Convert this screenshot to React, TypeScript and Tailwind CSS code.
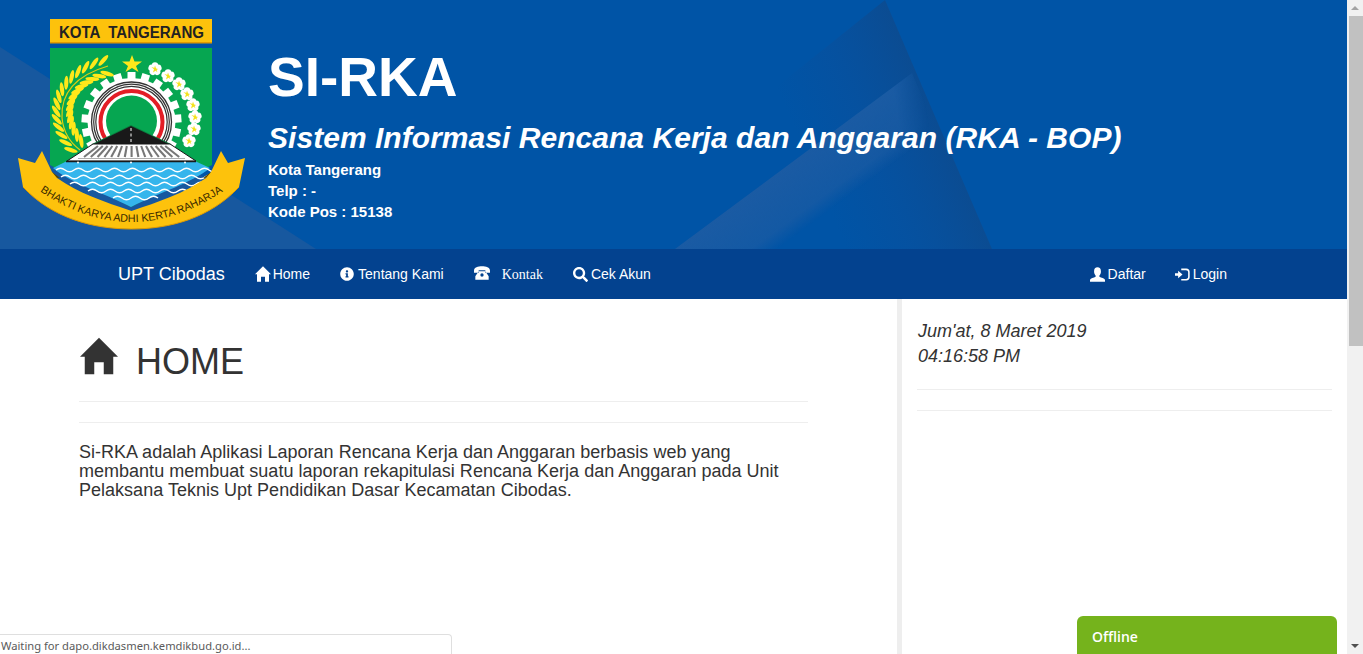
import React from "react";
import { FaInfoCircle, FaSearch } from "react-icons/fa";

const Glyph = ({ d, className = "" }: { d: string; className?: string }) => (
  <svg viewBox="0 0 24 24" className={className} fill="currentColor"><path d={d} fillRule="evenodd" /></svg>
);

const HOUSE = "M12 .5 24 12.5H21V23.5H15V16H9V23.5H3V12.5H0Z";
const PHONE = "M0 8.5C0 3.5 6 2 12 2S24 3.5 24 8.5V11.5H17V8H7V11.5H0ZM7 9.5H17L22 17V22H2V17ZM12 12.5A2.5 2.5 0 1 0 12 17.5 2.5 2.5 0 0 0 12 12.5Z";
const LOGIN = "M0 10H5V6L12 12 5 18V14H0ZM10 2.5H18C21.5 2.5 23.5 4.5 23.5 8V16C23.5 19.5 21.5 21.5 18 21.5H10V19H17.5C19.7 19 21 17.7 21 15.5V8.5C21 6.3 19.7 5 17.5 5H10Z";
const USER = "M12 .5C15.5.5 17.5 3 17.5 7 17.5 10.5 16 12.5 15 13.5V15.5C18 17 23 18 24 20.5V23.5H0V20.5C1 18 6 17 9 15.5V13.5C8 12.5 6.5 10.5 6.5 7 6.5 3 8.5.5 12 .5Z";

function HeaderBackdrop() {
  return (
    <svg className="absolute inset-0 h-full w-full" viewBox="0 0 1347 249" preserveAspectRatio="none" aria-hidden="true">
      <defs>
        <linearGradient id="wedge" gradientUnits="userSpaceOnUse" x1="938" y1="124" x2="815" y2="177">
          <stop offset="0" stopColor="#0b4c92" />
          <stop offset="0.55" stopColor="#0a4f9b" stopOpacity="0.5" />
          <stop offset="1" stopColor="#0a4f9b" stopOpacity="0" />
        </linearGradient>
        <linearGradient id="strip" gradientUnits="userSpaceOnUse" x1="794" y1="161" x2="830" y2="210">
          <stop offset="0" stopColor="#1a5ba3" />
          <stop offset="0.75" stopColor="#1a5ba3" stopOpacity="0.75" />
          <stop offset="1" stopColor="#1a5ba3" stopOpacity="0" />
        </linearGradient>
        <linearGradient id="stripEnd" gradientUnits="userSpaceOnUse" x1="860" y1="110" x2="925" y2="100">
          <stop offset="0" stopColor="#fff" />
          <stop offset="0.55" stopColor="#fff" />
          <stop offset="1" stopColor="#000" />
        </linearGradient>
        <mask id="stripMask" maskUnits="userSpaceOnUse" x="660" y="60" width="300" height="190">
          <rect x="660" y="60" width="300" height="190" fill="url(#stripEnd)" />
        </mask>
      </defs>
      <polygon points="0,47 316,249 0,249" fill="#17589f" />
      <polygon points="885,0 992,249 672,249 760,100" fill="url(#wedge)" />
      <polygon points="912,73 945,150 815,249 675,249" fill="url(#strip)" mask="url(#stripMask)" />
    </svg>
  );
}

function bez(t: number, a: number, b: number, c: number, d: number) {
  const u = 1 - t;
  return u * u * u * a + 3 * u * u * t * b + 3 * u * t * t * c + t * t * t * d;
}

function Logo() {
  const cx = 131.5;
  const cy = 122;
  const teeth = Array.from({ length: 21 }, (_, i) => i * (360 / 21));
  const flowers = [[155,69],[168,76],[179,84],[187,94],[193,105],[195,117],[194,129],[189,141]];
  const waves = [
    { y: 170, x0: 56, n: 17 },
    { y: 177, x0: 61, n: 16 },
    { y: 184, x0: 70, n: 14 },
    { y: 191, x0: 88, n: 10 },
    { y: 198, x0: 113, n: 4 },
  ];
  const wheat = Array.from({ length: 15 }, (_, i) => {
    const t = 0.02 + i * 0.066;
    const x = bez(t, 80, 50, 60, 110);
    const y = bez(t, 150, 118, 76, 66);
    const x2 = bez(t + 0.01, 80, 50, 60, 110);
    const y2 = bez(t + 0.01, 150, 118, 76, 66);
    return { x, y, a: (Math.atan2(y2 - y, x2 - x) * 180) / Math.PI };
  });
  return (
    <svg viewBox="0 0 260 249" className="h-[249px] w-[260px]" aria-label="Lambang Kota Tangerang">
      <defs>
        <path id="ribbon-text" d="M38 190Q131 254 225 190" />
      </defs>
      <rect x="50" y="19" width="162" height="24" fill="#fdc20c" />
      <rect x="50" y="42" width="162" height="1.5" fill="#e09a00" />
      <text x="59" y="37.5" textLength="145" lengthAdjust="spacingAndGlyphs" fontFamily="Liberation Sans, sans-serif" fontWeight="700" fontSize="16" fill="#222" xmlSpace="preserve">KOTA  TANGERANG</text>

      <path d="M50 48H212V165L131 207 50 165Z" fill="#06a651" />
      <path d="M132 55 134.5 61.5H142L136 66 138.5 72 132 68 125.5 72 128 66 122 61.5H129.5Z" fill="#ffe81a" />

      {teeth.map((a) => (
        <rect key={a} x={cx - 4} y={cy - 50} width="8" height="9" fill="#fff" transform={`rotate(${a} ${cx} ${cy})`} />
      ))}
      <circle cx={cx} cy={cy} r="44" fill="#fff" />
      <circle cx={cx} cy={cy} r="40" fill="none" stroke="#333" strokeWidth="1.3" />
      <circle cx={cx} cy={cy} r="37.8" fill="none" stroke="#333" strokeWidth="1.2" />
      <circle cx={cx} cy={cy} r="35.7" fill="none" stroke="#333" strokeWidth="1.2" />
      <circle cx={cx} cy={cy} r="31" fill="none" stroke="#e31e26" strokeWidth="4" />
      <circle cx={cx} cy={cy - 1} r="25.5" fill="#06a651" />

      <path d="M108 66Q60 80 62 118 64 138 80 150" fill="none" stroke="#e0cf10" strokeWidth="1.2" />
      {wheat.map(({ x, y, a }, i) => (
        <g key={i} transform={`translate(${x} ${y}) rotate(${a})`} fill="#ffe81a">
          <ellipse cx="6.5" cy="-4" rx="7" ry="2.1" transform="rotate(-32 0 0)" />
          <ellipse cx="6.5" cy="4" rx="7" ry="2.1" transform="rotate(32 0 0)" />
        </g>
      ))}

      {flowers.map(([x, y]) => (
        <g key={`${x}-${y}`}>
          {[0, 72, 144, 216, 288].map((a) => (
            <circle key={a} cx={x} cy={y - 3.6} r="3.2" fill="#fff" transform={`rotate(${a} ${x} ${y})`} />
          ))}
          <circle cx={x} cy={y} r="3" fill="#fff" />
          <path d={`M${x - 3.6} ${y - 2}L${x + 3} ${y}L${x - 2} ${y + 3.6}L${x} ${y - 3.6}L${x + 2.4} ${y + 3.2}Z`} fill="#f3e21a" />
        </g>
      ))}

      <polygon points="131,125 91,144.5 172,144.5" fill="#0b7d3f" />
      <polygon points="131,126 93,144.5 170,144.5" fill="#191919" />
      <path d="M131 128V143" stroke="#fff" strokeWidth="1" strokeDasharray="3 2.5" />
      <polygon points="93,144 170,144 196,161 67,161" fill="#fff" stroke="#191919" strokeWidth="1" />
      {Array.from({ length: 15 }, (_, i) => (
        <path key={i} d={`M${98 + i * 4.8} 146L${84 + i * 6.8} 157`} stroke="#777" strokeWidth="2.1" />
      ))}
      <path d="M78 158.5H185" stroke="#999" strokeWidth="0.8" />

      <path d="M66 161.5H196L210 168C190 184 160 192 131 207 102 192 72 184 53 168Z" fill="#35b5ec" />
      <path d="M66 161.5H196" stroke="#191919" strokeWidth="1.4" />
      <circle cx="78" cy="162.5" r="1" fill="#fff" />
      <circle cx="131" cy="162.5" r="1" fill="#fff" />
      <circle cx="185" cy="162.5" r="1" fill="#fff" />
      {waves.map(({ y, x0, n }) => (
        <path key={y} d={`M${x0} ${y}q4.5-3.5 9 0${" t9 0".repeat(n)}`} fill="none" stroke="#fff" strokeWidth="1.5" />
      ))}

      <path d="M52 172 60 178 47 177ZM211 172 203 178 216 177Z" fill="#5b4700" />
      <path d="M18 158 35 163 42 151 52 172 57 178C78 193 105 202 131.5 211 158 202 185 193 206 178L211 172 221 151 228 163 245 158 239 187C210 218 170 229 131.5 229 93 229 52 218 23 187Z" fill="#fdc20c" />
      <path d="M23 187C52 218 93 229 131.5 229 170 229 210 218 239 187" fill="none" stroke="#e09a00" strokeWidth="1" />
      <text fontFamily="Liberation Sans, sans-serif" fontSize="10.8" fill="#3a2a00">
        <textPath href="#ribbon-text" startOffset="50%" textAnchor="middle">BHAKTI KARYA ADHI KERTA RAHARJA</textPath>
      </text>
    </svg>
  );
}

export default function App() {
  return (
    <div className="relative h-[654px] overflow-hidden bg-white font-['Liberation_Sans',Arial,sans-serif] text-[#333]">
      <div className="flex h-[654px]">
        <div className="flex w-[1347px] flex-col">
          <header className="relative h-[249px] overflow-hidden bg-[#0054a6]">
            <HeaderBackdrop />
            <div className="relative flex h-full">
              <div className="w-[268px] shrink-0"><Logo /></div>
              <div className="flex flex-col pt-[44px] text-white">
                <h1 className="text-[55px] font-bold leading-[66px]">SI-RKA</h1>
                <h2 className="mt-[11px] text-[30px] font-bold italic leading-[33px] tracking-[0.04px]">Sistem Informasi Rencana Kerja dan Anggaran (RKA - BOP)</h2>
                <div className="mt-[5px] text-[15px] font-bold leading-[21px]">
                  <p>Kota Tangerang</p>
                  <p>Telp : -</p>
                  <p>Kode Pos : 15138</p>
                </div>
              </div>
            </div>
          </header>

          <nav className="flex h-[50px] items-center bg-[#03428f] pl-[118px] pr-[120px] text-[14px] text-white">
            <span className="mr-[30px] text-[18px]">UPT Cibodas</span>
            <a className="mr-[30px] flex items-center gap-[2px]"><Glyph d={HOUSE} className="h-[16px] w-[16px]" />Home</a>
            <a className="mr-[30px] flex items-center gap-[4px]"><FaInfoCircle className="h-[14px] w-[14px]" />Tentang Kami</a>
            <a className="mr-[30px] flex items-center"><Glyph d={PHONE} className="h-[16px] w-[16px] -translate-y-[1px]" /><span className="ml-[12px] font-['Liberation_Serif',serif] text-[14px]">Kontak</span></a>
            <a className="flex items-center gap-[3px]"><FaSearch className="h-[15px] w-[15px]" />Cek Akun</a>
            <a className="ml-auto mr-[29px] flex items-center gap-[3px]"><Glyph d={USER} className="h-[15px] w-[15px]" />Daftar</a>
            <a className="flex items-center gap-[3px]"><Glyph d={LOGIN} className="h-[15px] w-[15px]" />Login</a>
          </nav>

          <main className="flex min-h-0 flex-1">
            <section className="w-[897px] shrink-0 pl-[79px] pr-[89px] pt-[36px]">
              <h1 className="flex h-[47px] items-center text-[36px] leading-[40px]">
                <Glyph d={HOUSE} className="ml-[1px] mr-[18px] h-[38px] w-[38px] -translate-y-[3px] text-[#333]" />
                <span className="translate-y-[3px]">HOME</span>
              </h1>
              <hr className="mt-[19px] border-t border-[#eee]" />
              <hr className="mt-[20px] border-t border-[#eee]" />
              <p className="mt-[20px] text-[18px] leading-[19px] tracking-[0.015px]">
                Si-RKA adalah Aplikasi Laporan Rencana Kerja dan Anggaran berbasis web yang<br />
                membantu membuat suatu laporan rekapitulasi Rencana Kerja dan Anggaran pada Unit<br />
                Pelaksana Teknis Upt Pendidikan Dasar Kecamatan Cibodas.
              </p>
            </section>
            <aside className="flex-1 border-l-[5px] border-[#eee] pl-[15px] pr-[15px] pt-[20px]">
              <p className="ml-[1px] text-[18px] italic leading-[25px]">Jum'at, 8 Maret 2019</p>
              <p className="ml-[1px] text-[18px] italic leading-[25px]">04:16:58 PM</p>
              <hr className="mt-[20px] border-t border-[#eee]" />
              <hr className="mt-[20px] border-t border-[#eee]" />
            </aside>
          </main>
        </div>

        <div className="flex w-[16px] shrink-0 flex-col bg-[#f1f1f1]">
          <div className="flex h-[16px] items-center justify-center">
            <div className="h-0 w-0 border-x-[4px] border-b-[4px] border-x-transparent border-b-[#a3a3a3]" />
          </div>
          <div className="ml-[2px] h-[330px] w-[14px] bg-[#c1c1c1]" />
          <div className="flex-1" />
          <div className="flex h-[16px] items-center justify-center">
            <div className="h-0 w-0 border-x-[4px] border-t-[4px] border-x-transparent border-t-[#505050]" />
          </div>
        </div>
      </div>

      <div className="absolute bottom-0 left-0 h-[20px] w-[452px] rounded-tr-[4px] border-r border-t border-[#dfdfdf] bg-white pl-[1px] font-['Noto_Sans',sans-serif] text-[11.2px] leading-[22px] text-[#5a5a5a]">
        Waiting for dapo.dikdasmen.kemdikbud.go.id...
      </div>
      <div className="absolute bottom-0 left-[1077px] h-[38px] w-[260px] rounded-t-[6px] bg-[#75b31c] pl-[15px] pt-[11px] font-['Open_Sans','Noto_Sans',sans-serif] text-[14px] font-semibold leading-[20px] text-white">
        Offline
      </div>
    </div>
  );
}
